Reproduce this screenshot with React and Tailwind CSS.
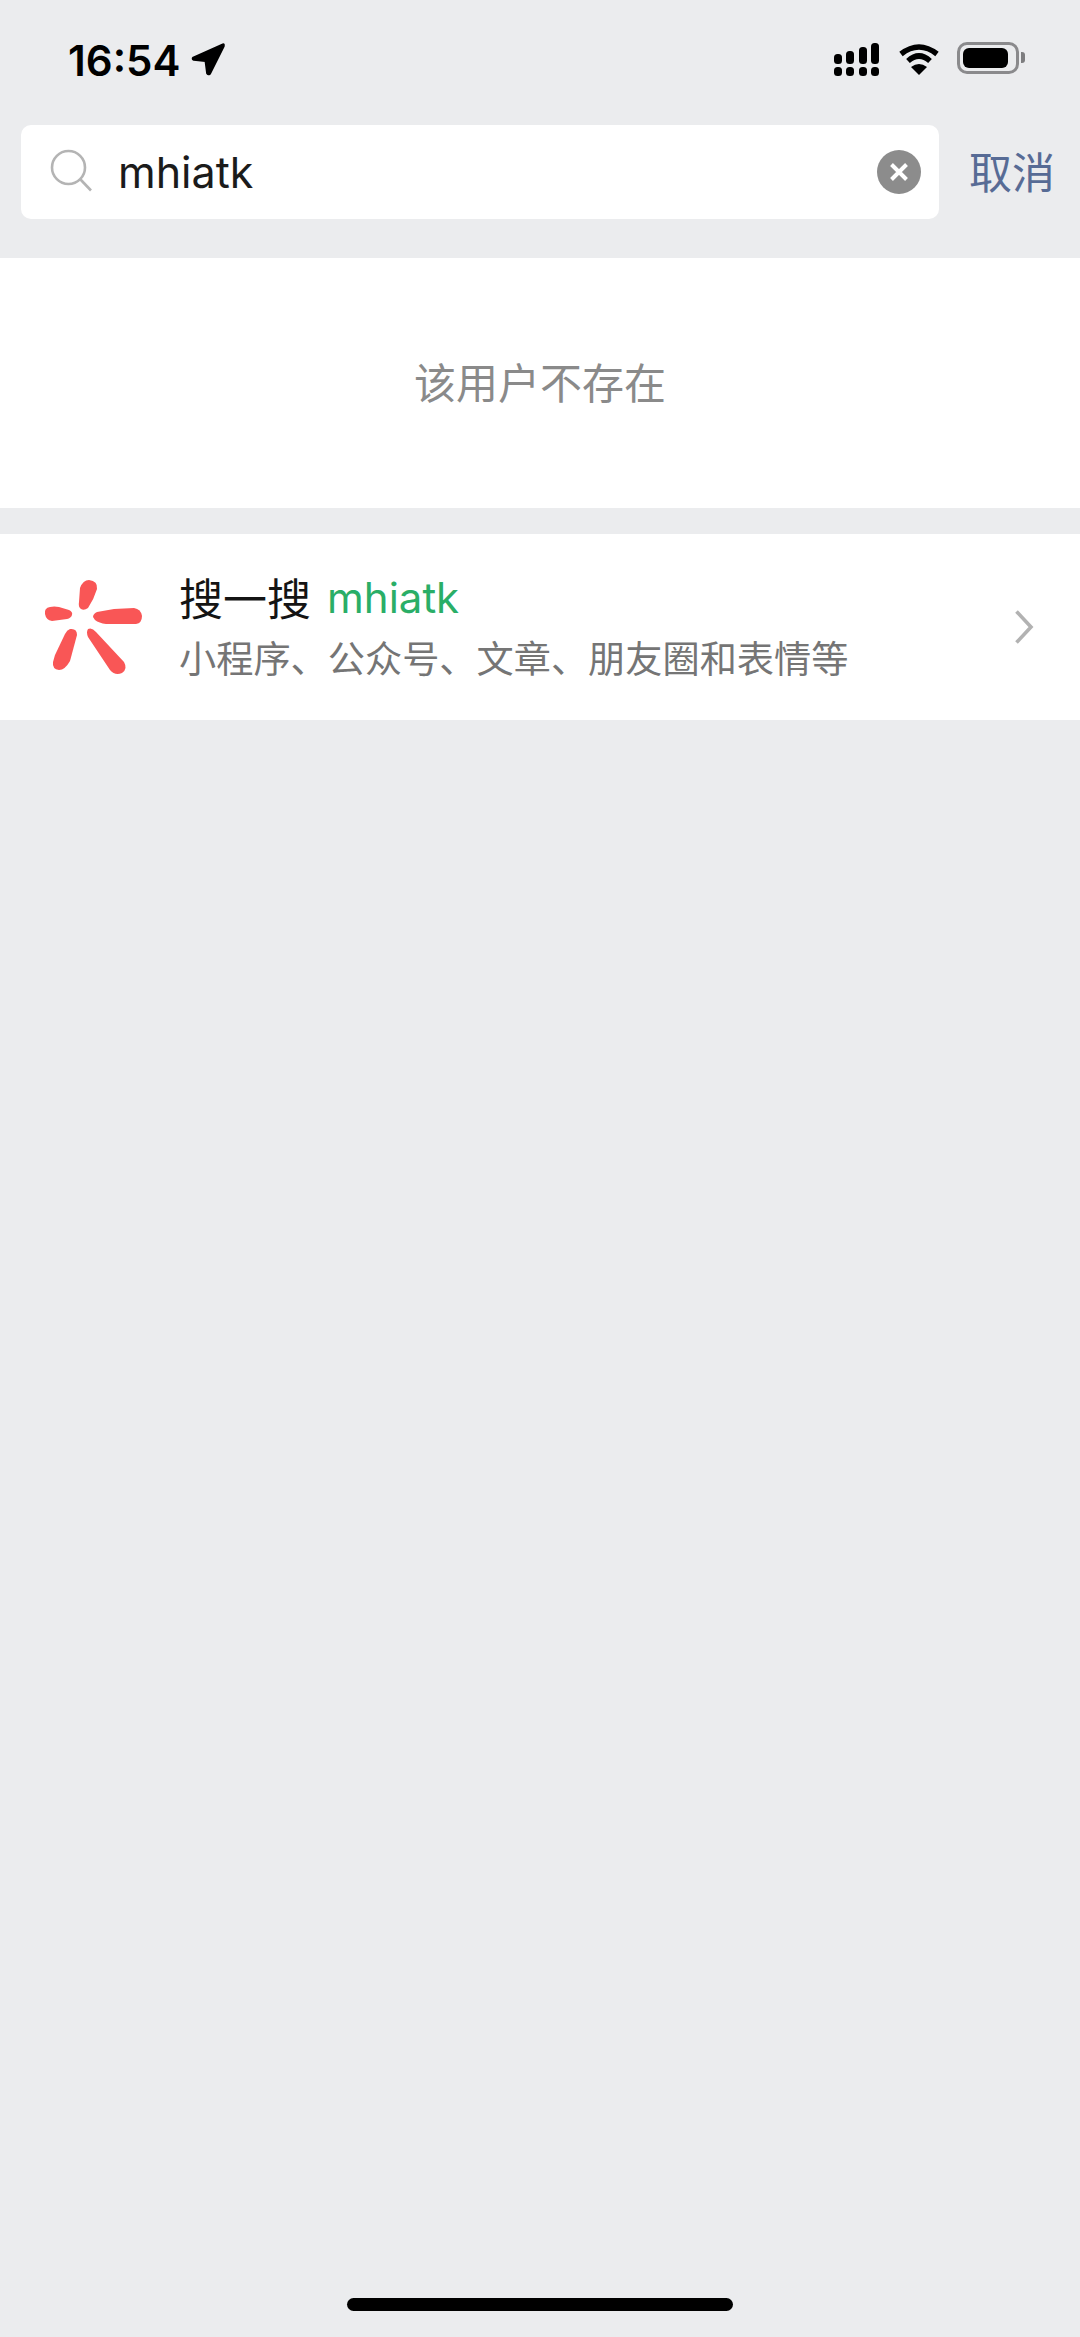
const cjk = { fontFamily: '"Noto Sans CJK SC", "Noto Sans", sans-serif' };

function StatusBar() {
  return (
    <div className="h-[125px] flex justify-between pl-[68px] pr-[55px] pt-[36px]">
      <div className="flex items-start gap-[10px]">
        <span className="text-[42px] leading-[50px] font-semibold text-black" style={{ fontFamily: 'Inter, sans-serif' }}>16:54</span>
        <svg width="36" height="36" viewBox="0 0 34 34" className="mt-[5px]">
          <path d="M31 3 L3 15.5 Q1.5 17 3.5 18 L14.5 19 L16 30.5 Q17 32.5 19 31 L32 5 Q32.5 2.5 31 3 Z" fill="#000" stroke="#000" strokeWidth="1.5" strokeLinejoin="round" />
        </svg>
      </div>
      <div className="flex items-start mt-[6px]">
        <svg width="46" height="34" viewBox="0 0 46 34" className="mt-[1px]">
          <g fill="#000">
            <rect x="0" y="24" width="8" height="9" rx="3.5" />
            <rect x="12" y="24" width="8" height="9" rx="3.5" />
            <rect x="25" y="24" width="8" height="9" rx="3.5" />
            <rect x="37" y="24" width="8" height="9" rx="3.5" />
            <rect x="0" y="11" width="8" height="10" rx="3.5" />
            <rect x="12" y="8" width="8" height="13" rx="3.5" />
            <rect x="25" y="4" width="8" height="17" rx="3.5" />
            <rect x="37" y="0" width="8" height="21" rx="3.5" />
          </g>
        </svg>
        <svg width="42" height="32" viewBox="0 0 42 32" className="ml-[18px] mt-[1px]">
          <g fill="none" stroke="#000" strokeWidth="5.5">
            <path d="M3 11 Q21 -3 39 11" />
            <path d="M10 18 Q21 8 32 18" />
          </g>
          <path d="M13 24 Q21 18 29 24 L21 32 Z" fill="#000" />
        </svg>
        <div className="ml-[17px] w-[62px] h-[32px] rounded-[10px] border-[3px] border-[#8a8a8c] p-[3px]">
          <div className="w-[45px] h-full rounded-[6px] bg-black" />
        </div>
        <div className="w-[4px] h-[11px] mt-[10px] ml-[2px] rounded-r-[3px] bg-[#7d7d7f]" />
      </div>
    </div>
  );
}

function SearchRow() {
  return (
    <div className="flex items-center pl-[21px] h-[94px]">
      <div className="w-[918px] h-[94px] rounded-[10px] bg-white flex items-center pl-[29px] pr-[18px]">
        <svg width="42" height="44" viewBox="0 0 42 44" className="shrink-0 mb-[2px]">
          <circle cx="18.5" cy="18.5" r="16.5" fill="none" stroke="#b4b4b4" strokeWidth="2.6" />
          <path d="M30.5 30.5 L41 41.5" stroke="#b4b4b4" strokeWidth="2.6" />
        </svg>
        <span className="ml-[26px] flex-1 text-[43px] leading-[60px] text-[#1b1b1b]" style={{ fontFamily: 'Inter, "Noto Sans", sans-serif' }}>mhiatk</span>
        <svg width="44" height="44" viewBox="0 0 44 44" className="shrink-0">
          <circle cx="22" cy="22" r="22" fill="#8c8c8c" />
          <path d="M14.5 14.5 L29.5 29.5 M29.5 14.5 L14.5 29.5" stroke="#fff" strokeWidth="4" />
        </svg>
      </div>
      <span className="ml-[30px] mt-[-5px] text-[43px] leading-[56px] text-[#576b95]" style={cjk}>取消</span>
    </div>
  );
}

export default function App() {
  return (
    <div className="relative w-[1080px] h-[2337px] bg-[#ebecee] overflow-hidden">
      <StatusBar />
      <SearchRow />

      <div className="mt-[39px] h-[250px] bg-white flex items-center justify-center">
        <span className="mt-[-5px] text-[42px] leading-[56px] text-[#8a8a8a]" style={cjk}>该用户不存在</span>
      </div>

      <div className="mt-[26px] h-[186px] bg-white flex items-center pl-[44px] pr-[46px]">
        <svg width="98" height="98" viewBox="0 0 98 98" className="shrink-0 mt-[1px]">
          <g fill="#f95656">
            <path d="M36 9 Q39 1 45 1 Q54 2 53 10 Q50 20 44 29 Q40 32 37 30 Q34 28 35 23 Z" />
            <path d="M1 35 Q0 29 6 28 Q10 27 15 28 L25 31 Q29 33 28 36 Q27 39 23 40 L8 42 Q2 41 1 35 Z" />
            <path d="M49 38 Q49 35 53 33 L70 30 L90 29 Q97 30 98 37 Q98 44 92 45 L62 45 Q55 44 51 41 Z" />
            <path d="M26 50 Q33 49 33 56 L26 82 Q21 91 15 91 Q8 90 9 83 L11 76 L21 55 Q23 51 26 50 Z" />
            <path d="M44 50 Q48 48 52 53 L80 83 Q84 90 78 94 Q71 97 66 91 L44 58 Q42 53 44 50 Z" />
          </g>
        </svg>
        <div className="ml-[37px] flex-1 mt-[-3px]">
          <div className="flex items-center h-[62px] mt-[-3px]">
            <span className="text-[44px] leading-[62px] text-[#141414] whitespace-pre" style={cjk}>搜一搜</span>
            <span className="ml-[16px] mt-[2px] text-[42px] leading-[62px] text-[#2aae67]" style={{ fontFamily: 'Inter, "Noto Sans", sans-serif' }}>mhiatk</span>
          </div>
          <div className="text-[37.2px] leading-[50px] text-[#757575] mt-[4px] whitespace-nowrap" style={cjk}>小程序、公众号、文章、朋友圈和表情等</div>
        </div>
        <svg width="20" height="36" viewBox="0 0 20 36" className="shrink-0 mt-[-1px]">
          <path d="M2.5 2.5 L17 18 L2.5 33.5" fill="none" stroke="#b2b2b2" strokeWidth="3.6" />
        </svg>
      </div>

      <div className="absolute left-[347px] top-[2298px] w-[386px] h-[13px] rounded-full bg-black" />
    </div>
  );
}
